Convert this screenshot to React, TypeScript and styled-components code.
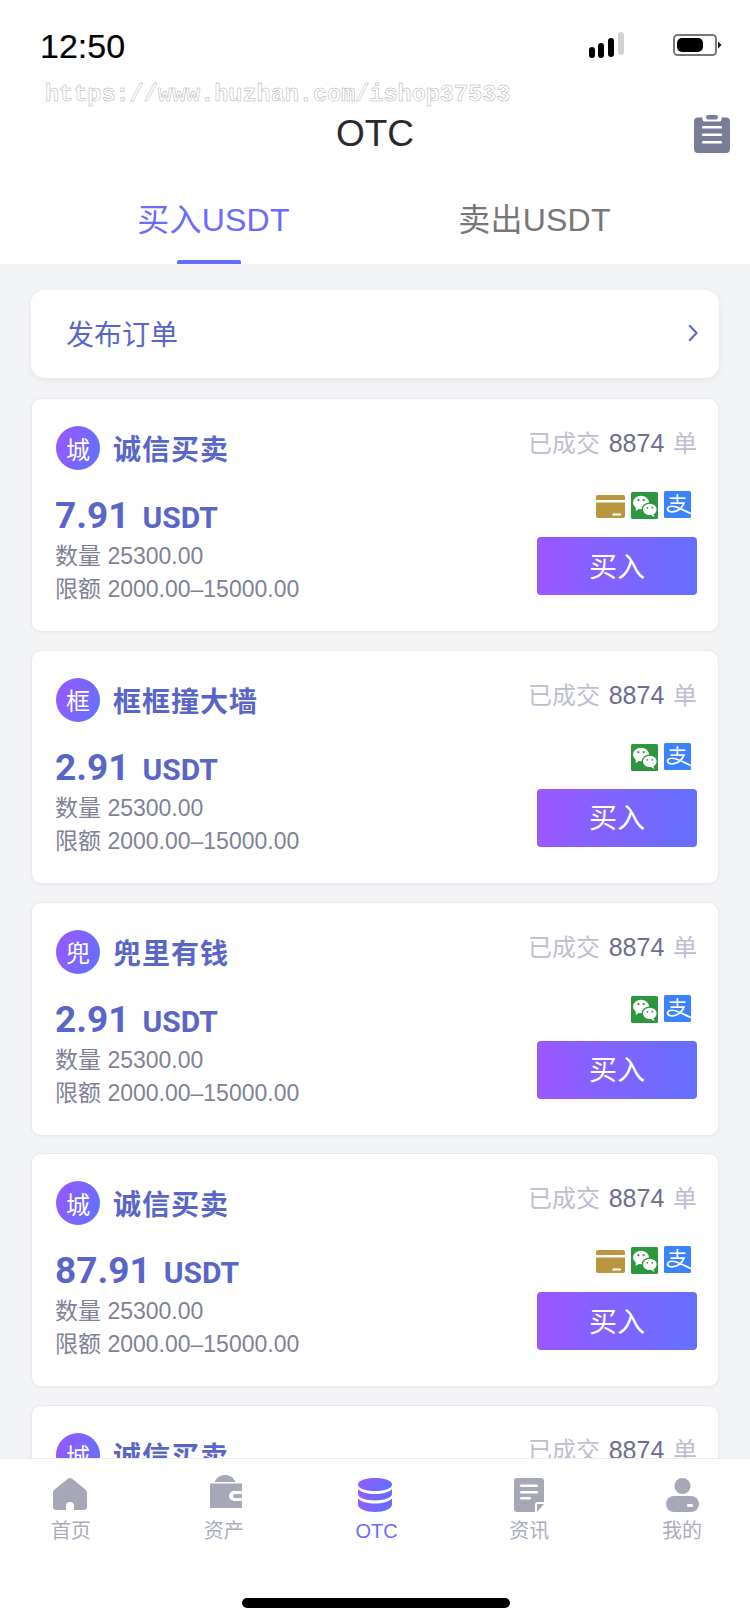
import React from "react";
import styled, { createGlobalStyle } from "styled-components";

const Global = createGlobalStyle`
  html, body { margin: 0; padding: 0; background: #fff; }
  * { box-sizing: border-box; }
  body { font-family: "Liberation Sans", "Noto Sans CJK SC", sans-serif; }
`;

const Page = styled.div`
  position: relative;
  width: 750px;
  height: 1624px;
  overflow: hidden;
  display: flex;
  flex-direction: column;
  background: #f3f4f6;
`;

const Header = styled.header`
  background: #fff;
  flex: none;
`;

const StatusBar = styled.div`
  height: 68px;
  display: flex;
  align-items: flex-start;
  justify-content: space-between;
  padding: 27px 28px 0 40px;
`;

const Clock = styled.span`
  font-size: 34px;
  line-height: 38px;
  color: #000;
  -webkit-text-stroke: 0.2px #000;
`;

const StatusIcons = styled.div`
  display: flex;
  align-items: flex-start;
  gap: 49px;
  margin-top: 5px;
`;

const Watermark = styled.div`
  position: absolute;
  left: 45px;
  top: 78px;
  font-family: "Liberation Mono", monospace;
  font-weight: 700;
  font-size: 23.5px;
  line-height: 34px;
  color: #fff;
  -webkit-text-stroke: 0.5px #aeaeae;
  white-space: nowrap;
`;

const TitleRow = styled.div`
  height: 128px;
  display: grid;
  grid-template-columns: 1fr auto 1fr;
  align-items: center;
  padding: 0 20px;
`;

const Title = styled.h1`
  grid-column: 2;
  margin: 4px 0 0;
  font-size: 37px;
  line-height: 44px;
  font-weight: 400;
  color: #2a2a2e;
`;

const TitleAction = styled.div`
  justify-self: end;
  display: flex;
  margin-top: 4px;
`;

const Tabs = styled.div`
  height: 68px;
  display: grid;
  grid-template-columns: 1fr 1fr;
  padding: 0 55px 0 53px;
`;

const Tab = styled.div<{ $active?: boolean }>`
  position: relative;
  text-align: center;
  font-size: 32px;
  line-height: 48px;
  letter-spacing: 0.2px;
  color: ${(p) => (p.$active ? "#6a6cff" : "#777777")};

  ${(p) =>
    p.$active &&
    `
    &::after {
      content: "";
      position: absolute;
      left: 50%;
      bottom: 0;
      width: 64px;
      height: 4px;
      margin-left: -36.5px;
      background: #666cff;
      border-radius: 2px 2px 0 0;
    }
  `}
`;

const List = styled.main`
  flex: 1;
  min-height: 0;
  overflow: hidden;
  display: flex;
  flex-direction: column;
  gap: 17.75px;
  padding: 26px 31px 0;
`;

const Publish = styled.div`
  flex: none;
  height: 88px;
  margin-bottom: 2.25px;
  display: flex;
  align-items: center;
  justify-content: space-between;
  padding: 0 21px 2px 35px;
  background: #fff;
  border-radius: 14px;
  box-shadow: 0 2px 6px rgba(120, 124, 150, 0.12);
  font-size: 28px;
  color: #5a65c9;
`;

const Card = styled.article`
  flex: none;
  height: 234px;
  padding: 27px 21px 0 24px;
  background: #fff;
  border: 1px solid #e9e9ee;
  border-radius: 10px;
  box-shadow: 0 1px 3px rgba(120, 124, 150, 0.07);
`;

const CardHead = styled.div`
  display: flex;
  justify-content: space-between;
  align-items: flex-start;
  height: 44px;
`;

const Seller = styled.div`
  display: flex;
  align-items: flex-start;
  gap: 13px;
`;

const Avatar = styled.div`
  width: 44px;
  height: 44px;
  border-radius: 50%;
  display: flex;
  align-items: center;
  justify-content: center;
  background: linear-gradient(110deg, #9c56ff, #5c74ff);
  color: #fff;
  font-size: 24px;
`;

const SellerName = styled.span`
  font-size: 28px;
  line-height: 44px;
  font-weight: 700;
  letter-spacing: 1px;
  color: #5a65c9;
  margin-top: 3px;
`;

const Deals = styled.div`
  font-size: 24px;
  line-height: 36px;
  margin-top: -1px;
  color: #bcbed0;
  word-spacing: 2px;
`;

const DealCount = styled.span`
  font-size: 25px;
  color: #6c6e90;
`;

const CardBody = styled.div`
  display: flex;
  justify-content: space-between;
  margin-top: 21px;
`;

const Quote = styled.div`
  display: flex;
  flex-direction: column;
  margin-left: -1px;
`;

const Price = styled.div`
  font-family: "Roboto", "Liberation Sans", sans-serif;
  font-weight: 700;
  font-size: 37px;
  line-height: 46px;
  padding-top: 2px;
  color: #5a65c9;
  margin-bottom: -1px;
  white-space: nowrap;
`;

const Unit = styled.span`
  font-size: 30px;
  margin-left: 13px;
`;

const Meta = styled.div`
  font-size: 23px;
  line-height: 33px;
  color: #7f8297;
  white-space: nowrap;
`;

const Trade = styled.div`
  display: flex;
  flex-direction: column;
  align-items: flex-end;
`;

const Pays = styled.div`
  height: 28px;
  display: flex;
  align-items: flex-start;
  gap: 6px;
  margin-right: 6px;
  margin-bottom: 18px;
`;

const BuyButton = styled.button`
  width: 160px;
  height: 58px;
  border: 0;
  border-radius: 4px;
  padding: 0 0 3px;
  background: linear-gradient(90deg, #9a58ff, #646fff);
  color: #fff;
  font-family: inherit;
  font-size: 28px;
`;

const TabBar = styled.nav`
  position: relative;
  flex: none;
  height: 166px;
  background: #fff;
  border-top: 1px solid #ececf0;
  display: flex;
  justify-content: space-between;
  padding: 19px 38px 0 41px;
`;

const NavItem = styled.div<{ $active?: boolean }>`
  width: 60px;
  display: flex;
  flex-direction: column;
  align-items: center;
  color: ${(p) => (p.$active ? "#6a6cff" : "#abadbf")};
  font-size: 20px;
  line-height: 28px;
`;

const NavIcon = styled.div`
  height: 34px;
  display: flex;
  align-items: flex-start;
  justify-content: center;
  margin-bottom: 5px;
`;

const HomeBar = styled.div`
  position: absolute;
  left: 242px;
  top: 139px;
  width: 268px;
  height: 10px;
  border-radius: 5px;
  background: #000;
`;

const Signal = () => (
  <svg width="35" height="26" viewBox="0 0 35 26">
    <rect x="0" y="15" width="6" height="11" rx="3" fill="#000" />
    <rect x="9" y="11" width="6" height="15" rx="3" fill="#000" />
    <rect x="19" y="6" width="6" height="19" rx="3" fill="#000" />
    <rect x="29" y="0" width="6" height="23" rx="3" fill="#d2d2d2" />
  </svg>
);

const Battery = () => (
  <svg width="49" height="22" viewBox="0 0 49 22" style={{ marginTop: 2 }}>
    <rect x="1" y="1" width="42" height="20" rx="3.5" fill="none" stroke="#777" strokeWidth="2" />
    <rect x="4" y="4" width="26" height="14" rx="5" fill="#000" />
    <path d="M45 7.5 L48.5 11 L45 14.5 Z" fill="#111" />
  </svg>
);

const Clipboard = () => (
  <svg width="36" height="38" viewBox="0 0 36 38">
    <path d="M4 2.5 H8.5 V4.5 A2 2 0 0 0 10.5 6.5 H25.5 A2 2 0 0 0 27.5 4.5 V2.5 H32 A4 4 0 0 1 36 6.5 V34 A4 4 0 0 1 32 38 H4 A4 4 0 0 1 0 34 V6.5 A4 4 0 0 1 4 2.5 Z" fill="#7a7d96" />
    <rect x="12" y="0" width="12" height="4.5" rx="2.2" fill="#7a7d96" />
    <g fill="#fff">
      <rect x="8" y="11" width="20" height="2.6" rx="1.2" />
      <rect x="8" y="18.5" width="20" height="2.6" rx="1.2" />
      <rect x="8" y="26" width="20" height="2.6" rx="1.2" />
    </g>
  </svg>
);

const Chevron = () => (
  <svg width="10" height="18" viewBox="0 0 10 18">
    <path d="M1.2 1.2 L8.6 9 L1.2 16.8" fill="none" stroke="#5a65c9" strokeWidth="2" />
  </svg>
);

const BankIcon = () => (
  <svg width="29" height="23" viewBox="0 0 29 23" style={{ marginTop: 4 }}>
    <path d="M2 0 H27 A2 2 0 0 1 29 2 V5 H0 V2 A2 2 0 0 1 2 0 Z M0 7.5 H29 V21 A2 2 0 0 1 27 23 H2 A2 2 0 0 1 0 21 Z" fill="#b9963f" />
    <path d="M17 18.5 H25 V20.5 H16 Z" fill="#fff" />
  </svg>
);

const WechatIcon = () => (
  <svg width="27" height="27" viewBox="0 0 27 27" style={{ marginTop: 1 }}>
    <rect width="27" height="27" rx="1.5" fill="#2e963f" />
    <ellipse cx="10" cy="10.5" rx="8" ry="6.8" fill="#fff" />
    <path d="M5 14.5 L4.6 19 L9.5 16 Z" fill="#fff" />
    <ellipse cx="18.6" cy="17.4" rx="8" ry="6.8" fill="#2e963f" />
    <ellipse cx="18.8" cy="17.4" rx="6.8" ry="5.7" fill="#fff" />
    <path d="M22 21.5 L23.6 25 L19 22.5 Z" fill="#fff" />
    <circle cx="7.4" cy="8.2" r="1.1" fill="#2e963f" />
    <circle cx="12.6" cy="8.2" r="1.1" fill="#2e963f" />
    <circle cx="16.4" cy="15.8" r="0.9" fill="#2e963f" />
    <circle cx="21.2" cy="15.8" r="0.9" fill="#2e963f" />
  </svg>
);

const AlipayIcon = () => (
  <svg width="27" height="27" viewBox="0 0 27 27">
    <rect width="27" height="27" rx="1.5" fill="#3a82ff" />
    <g fill="none" stroke="#fff" strokeWidth="1.7">
      <path d="M5.5 7.2 H21.5" />
      <path d="M13.4 3 V12" />
      <path d="M6.5 12.2 H20 C18.4 16 14.5 20.4 8.5 20.8 C5 21 3.2 19.4 3.6 17.6 C4 15.6 7.4 14.6 11.5 15.8 C16 17.2 20.5 19.6 27 22.6" />
    </g>
  </svg>
);

const HomeIcon = () => (
  <svg width="34" height="32" viewBox="0 0 34 32" style={{ marginLeft: -2 }}>
    <path d="M14.6 1 C16 -0.2 18 -0.2 19.4 1 L32.4 11.4 C33.4 12.2 34 13.4 34 14.8 V28.5 A3.5 3.5 0 0 1 30.5 32 H21 V28 A4 4 0 0 0 13 28 V32 H3.5 A3.5 3.5 0 0 1 0 28.5 V14.8 C0 13.4 0.6 12.2 1.6 11.4 Z" fill="#a6a8b8" />
  </svg>
);

const WalletIcon = () => (
  <svg width="32" height="33" viewBox="0 0 32 33" style={{ marginTop: -3, marginLeft: 4 }}>
    <path d="M4.5 7 C6.5 2.5 10.5 0 15 0 C19.5 0 23.5 2.5 25.5 7 Z" fill="#a6a8b8" />
    <path d="M0 8.5 H32 V16 H24 A5 5 0 0 0 24 26 H32 V33 H0 Z" fill="#a6a8b8" />
    <path d="M32 19 H25 A2 2 0 0 0 25 23 H32 Z" fill="#a6a8b8" />
  </svg>
);

const StackIcon = () => (
  <svg width="34" height="34" viewBox="0 0 34 34" style={{ marginLeft: -3 }}>
    <defs>
      <linearGradient id="otcStack" x1="0" y1="0" x2="1" y2="0.4">
        <stop offset="0" stopColor="#9a58ff" />
        <stop offset="1" stopColor="#646fff" />
      </linearGradient>
    </defs>
    <path d="M17 0 C26.4 0 34 2.6 34 6.5 C34 10.4 26.4 13 17 13 C7.6 13 0 10.4 0 6.5 C0 2.6 7.6 0 17 0 Z" fill="url(#otcStack)" />
    <path d="M0 11 C3 14.2 9.5 16 17 16 C24.5 16 31 14.2 34 11 V16 C34 19.6 26.4 22.5 17 22.5 C7.6 22.5 0 19.6 0 16 Z" fill="url(#otcStack)" />
    <path d="M0 20.5 C3 23.7 9.5 25.5 17 25.5 C24.5 25.5 31 23.7 34 20.5 V26.5 C34 30.6 26.4 34 17 34 C7.6 34 0 30.6 0 26.5 Z" fill="url(#otcStack)" />
  </svg>
);

const NewsIcon = () => (
  <svg width="30" height="34" viewBox="0 0 30 34">
    <path d="M3 0 H27 A3 3 0 0 1 30 3 V24 H24 A3 3 0 0 0 21 27 V34 H3 A3 3 0 0 1 0 31 V3 A3 3 0 0 1 3 0 Z" fill="#a6a8b8" />
    <path d="M30 26 L23 34 V26 Z" fill="#a6a8b8" />
    <g fill="#fff">
      <rect x="6" y="6.5" width="18" height="2.6" rx="1.3" />
      <rect x="6" y="13" width="18" height="2.6" rx="1.3" />
      <rect x="6" y="19" width="11" height="2.6" rx="1.3" />
    </g>
  </svg>
);

const UserIcon = () => (
  <svg width="33" height="34" viewBox="0 0 33 34">
    <circle cx="16.5" cy="8" r="8" fill="#a6a8b8" />
    <rect x="0" y="18" width="33" height="16" rx="8" fill="#a6a8b8" />
    <rect x="21" y="26" width="6" height="3" rx="1.2" fill="#fff" />
  </svg>
);

type Offer = { badge: string; name: string; price: string; bank: boolean };

const offers: Offer[] = [
  { badge: "城", name: "诚信买卖", price: "7.91", bank: true },
  { badge: "框", name: "框框撞大墙", price: "2.91", bank: false },
  { badge: "兜", name: "兜里有钱", price: "2.91", bank: false },
  { badge: "城", name: "诚信买卖", price: "87.91", bank: true },
  { badge: "城", name: "诚信买卖", price: "7.91", bank: true },
];

const navItems = [
  { label: "首页", icon: <HomeIcon /> },
  { label: "资产", icon: <WalletIcon /> },
  { label: "OTC", icon: <StackIcon />, active: true },
  { label: "资讯", icon: <NewsIcon /> },
  { label: "我的", icon: <UserIcon /> },
];

export default function App() {
  return (
    <Page>
      <Global />
      <Header>
        <StatusBar>
          <Clock>12:50</Clock>
          <StatusIcons>
            <Signal />
            <Battery />
          </StatusIcons>
        </StatusBar>
        <TitleRow>
          <Title>OTC</Title>
          <TitleAction>
            <Clipboard />
          </TitleAction>
        </TitleRow>
        <Tabs>
          <Tab $active>买入USDT</Tab>
          <Tab>卖出USDT</Tab>
        </Tabs>
      </Header>
      <List>
        <Publish>
          发布订单
          <Chevron />
        </Publish>
        {offers.map((o, i) => (
          <Card key={i}>
            <CardHead>
              <Seller>
                <Avatar>{o.badge}</Avatar>
                <SellerName>{o.name}</SellerName>
              </Seller>
              <Deals>
                已成交 <DealCount>8874</DealCount> 单
              </Deals>
            </CardHead>
            <CardBody>
              <Quote>
                <Price>
                  {o.price}
                  <Unit>USDT</Unit>
                </Price>
                <Meta>数量 25300.00</Meta>
                <Meta>限额 2000.00–15000.00</Meta>
              </Quote>
              <Trade>
                <Pays>
                  {o.bank && <BankIcon />}
                  <WechatIcon />
                  <AlipayIcon />
                </Pays>
                <BuyButton>买入</BuyButton>
              </Trade>
            </CardBody>
          </Card>
        ))}
      </List>
      <TabBar>
        {navItems.map((n) => (
          <NavItem key={n.label} $active={n.active}>
            <NavIcon>{n.icon}</NavIcon>
            {n.label}
          </NavItem>
        ))}
        <HomeBar />
      </TabBar>
      <Watermark>https://www.huzhan.com/ishop37533</Watermark>
    </Page>
  );
}
